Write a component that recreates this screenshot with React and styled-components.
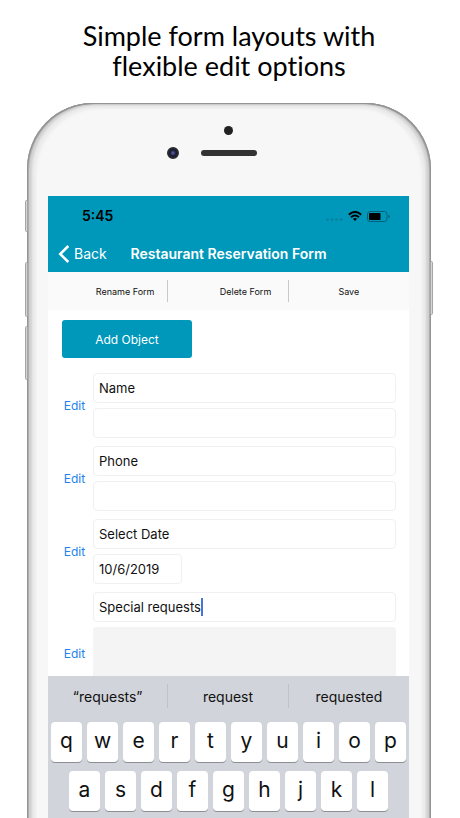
import React, { useState } from "react";
import styled, { createGlobalStyle } from "styled-components";

const teal = "#0098ba";

const Global = createGlobalStyle`
  *, *::before, *::after { box-sizing: border-box; }
  body { margin: 0; background: #fff; font-family: Inter, "Liberation Sans", sans-serif; color: #111; }
  button, input, textarea { font: inherit; color: inherit; margin: 0; }
`;

const Page = styled.main`
  min-height: 100vh;
  display: flex;
  flex-direction: column;
  padding: 0 29px 0 27px;
`;

const Headline = styled.h1`
  margin: 0;
  padding: 21px 0 22px;
  text-align: center;
  font-family: "Century Gothic", "URW Gothic", Lato, sans-serif;
  font-weight: 400;
  font-size: 27px;
  line-height: 30px;
  font-variant-ligatures: none;
  color: #000;
`;

const Phone = styled.div`
  position: relative;
  flex: 1;
  display: flex;
  flex-direction: column;
  padding: 0 22px 0 21px;
  border-radius: 66px 66px 0 0;
  background: #f7f7f7;
  box-shadow:
    inset 1px 1px 0 #949494,
    inset -1px 1px 0 #949494,
    inset 2px 1px 1px #a9a9a9,
    inset -2px 1px 1px #a9a9a9,
    inset 5px 2px 2px #d2d2d2,
    inset -5px 2px 2px #d2d2d2,
    inset 9px 5px 3px #ebebeb,
    inset -9px 5px 3px #ebebeb;
`;

const SideButton = styled.span`
  position: absolute;
  top: ${(p) => p.$top}px;
  ${(p) => p.$side}: -2px;
  width: 3px;
  height: ${(p) => p.$height}px;
  border: 1px solid #a5a5a5;
  border-radius: 2px;
  background: #d6d6d6;
`;

const Bezel = styled.div`
  display: flex;
  flex-direction: column;
  align-items: center;
  gap: 12px;
  height: 93px;
  padding-top: 23px;
`;

const Sensor = styled.span`
  width: 9px;
  height: 9px;
  border-radius: 50%;
  background: #222;
`;

const SpeakerRow = styled.div`
  display: grid;
  grid-template-columns: 12px 56px 12px;
  align-items: center;
  gap: 22px;
`;

const Camera = styled.span`
  height: 12px;
  border-radius: 50%;
  border: 2px solid #29292e;
  background: radial-gradient(circle, #6668a0 0, #20224a 45%, #15151d 80%);
`;

const Speaker = styled.span`
  height: 6px;
  border-radius: 3px;
  background: #333;
`;

const Screen = styled.div`
  flex: 1;
  display: flex;
  flex-direction: column;
  background: #fff;
`;

const AppHeader = styled.header`
  background: ${teal};
  color: #fff;
`;

const StatusBar = styled.div`
  display: flex;
  justify-content: space-between;
  align-items: center;
  height: 40px;
  padding: 0 19px 0 34px;
  color: #000;
`;

const Time = styled.span`
  font-size: 14px;
  line-height: 20px;
  font-weight: 600;
`;

const StatusIcons = styled.span`
  display: flex;
  align-items: center;
  gap: 5px;
`;

const NavBar = styled.nav`
  display: grid;
  grid-template-columns: 1fr auto 1fr;
  align-items: center;
  height: 36px;
  padding: 0 10px;
`;

const BackButton = styled.button`
  display: flex;
  align-items: center;
  gap: 4px;
  padding: 0;
  border: 0;
  background: none;
  font-size: 14px;
  line-height: 20px;
`;

const Title = styled.h2`
  margin: 0;
  font-size: 14px;
  line-height: 20px;
  font-weight: 600;
  white-space: nowrap;
`;

const Toolbar = styled.div`
  display: grid;
  grid-template-columns: repeat(3, 1fr);
  align-items: center;
  height: 38px;
  background: #fafafa;
`;

const ToolButton = styled.button`
  height: 22px;
  padding: 0 0 0 ${(p) => (p.$last ? 0 : 35)}px;
  border: 0;
  border-right: ${(p) => (p.$last ? "0" : "1px solid #c9c9c9")};
  background: none;
  font-size: 9px;
`;

const Form = styled.form`
  display: flex;
  flex-direction: column;
  gap: 8px;
  padding: 10px 13px 0 14px;
`;

const AddButton = styled.button`
  align-self: flex-start;
  width: 130px;
  height: 38px;
  margin-bottom: 7px;
  border: 0;
  border-radius: 3px;
  background: ${teal};
  color: #fff;
  font-size: 12px;
`;

const Group = styled.div`
  display: grid;
  grid-template-columns: 25px 1fr;
  align-items: center;
  gap: 6px;
`;

const EditButton = styled.button`
  padding: 0;
  border: 0;
  background: none;
  color: #2482ee;
  font-size: 12px;
  line-height: 16px;
`;

const Fields = styled.div`
  display: flex;
  flex-direction: column;
  gap: 5px;
`;

const TextField = styled.input`
  width: ${(p) => (p.$short ? "89px" : "100%")};
  height: 30px;
  padding: 0 5px;
  border: 1px solid #f0f0f0;
  border-radius: 4px;
  background: #fff;
  font-size: 13px;
  outline: none;
`;

const FocusedField = styled.label`
  display: flex;
  align-items: center;
  height: 30px;
  padding: 0 5px;
  border: 1px solid #f0f0f0;
  border-radius: 4px;
  font-size: 13px;
`;

const FocusedInput = styled.input`
  field-sizing: content;
  padding: 0;
  border: 0;
  outline: none;
  background: none;
`;

const Caret = styled.span`
  width: 2px;
  height: 18px;
  background: #4a72dc;
`;

const Notes = styled.textarea`
  display: block;
  width: 100%;
  height: 88px;
  border: 0;
  border-radius: 3px;
  background: #f4f4f4;
  resize: none;
  outline: none;
`;

/* The keyboard slides over the lower part of the form. */
const Keyboard = styled.section`
  position: relative;
  flex: 1;
  margin-top: -39px;
  background: #d1d4db;
`;

const Suggestions = styled.div`
  display: grid;
  grid-template-columns: repeat(3, 1fr);
  padding: 8px 0 14px;
`;

const Suggestion = styled.button`
  height: 24px;
  padding: 0;
  border: 0;
  border-right: ${(p) => (p.$last ? "0" : "1px solid #c0c3cb")};
  background: none;
  font-size: 14px;
`;

const KeyRow = styled.div`
  display: flex;
  gap: 5px;
  padding: 0 ${(p) => p.$inset}px 9px;
`;

const Key = styled.button`
  flex: 1;
  min-width: 0;
  height: 40px;
  padding: 0 0 2px;
  border: 0;
  border-radius: 4px;
  background: #fff;
  box-shadow: 0 1px 0 #8c8f94;
  font-size: 21px;
  line-height: 28px;
`;

const WifiIcon = () => (
  <svg width="14" height="10" viewBox="0 0 14 10" aria-hidden="true">
    <g fill="none" stroke="#000" strokeWidth="2">
      <path d="M.8 3.7Q7-1.8 13.2 3.7" />
      <path d="M3 6.2Q7 2.7 11 6.2" />
    </g>
    <path d="M4.9 7.8Q7 6 9.1 7.8L7 10Z" />
  </svg>
);

const BatteryIcon = () => (
  <svg width="23" height="11" viewBox="0 0 23 11" aria-hidden="true">
    <rect x=".5" y=".5" width="19.5" height="10" rx="2.6" fill="none" stroke="#056177" />
    <rect x="2" y="2" width="11.5" height="7" rx="1" />
    <path d="M21.3 3.7Q22.8 4.2 22.8 5.5T21.3 7.3Z" fill="#056177" />
  </svg>
);

const SignalIcon = () => (
  <svg width="17" height="10" viewBox="0 0 17 10" aria-hidden="true" fill="#087b97">
    {[1.5, 6, 10.5, 15].map((x) => (
      <circle key={x} cx={x} cy="8.6" r="1.2" />
    ))}
  </svg>
);

const BackIcon = () => (
  <svg width="12" height="18" viewBox="0 0 12 18" aria-hidden="true">
    <path d="M10.3 1 2.2 9l8.1 8" fill="none" stroke="#fff" strokeWidth="2.5" />
  </svg>
);

const groups = [
  { label: "Name", value: "" },
  { label: "Phone", value: "" },
  { label: "Select Date", value: "10/6/2019", short: true },
];

const suggestions = ["“requests”", "request", "requested"];

const keyRows = [
  { keys: "qwertyuiop", inset: 3 },
  { keys: "asdfghjkl", inset: 21 },
];

export default function App() {
  const [request, setRequest] = useState("Special requests");
  return (
    <Page>
      <Global />
      <Headline>
        Simple form layouts with
        <br />
        flexible edit options
      </Headline>
      <Phone>
        <SideButton $side="left" $top={97} $height={32} />
        <SideButton $side="left" $top={159} $height={55} />
        <SideButton $side="left" $top={223} $height={54} />
        <SideButton $side="right" $top={158} $height={54} />
        <Bezel>
          <Sensor />
          <SpeakerRow>
            <Camera />
            <Speaker />
          </SpeakerRow>
        </Bezel>
        <Screen>
          <AppHeader>
            <StatusBar>
              <Time>5:45</Time>
              <StatusIcons>
                <SignalIcon />
                <WifiIcon />
                <BatteryIcon />
              </StatusIcons>
            </StatusBar>
            <NavBar>
              <BackButton type="button">
                <BackIcon />
                Back
              </BackButton>
              <Title>Restaurant Reservation Form</Title>
            </NavBar>
          </AppHeader>
          <Toolbar>
            <ToolButton type="button">Rename Form</ToolButton>
            <ToolButton type="button">Delete Form</ToolButton>
            <ToolButton type="button" $last>
              Save
            </ToolButton>
          </Toolbar>
          <Form>
            <AddButton type="button">Add Object</AddButton>
            {groups.map((g) => (
              <Group key={g.label}>
                <EditButton type="button">Edit</EditButton>
                <Fields>
                  <TextField aria-label={`${g.label} label`} defaultValue={g.label} />
                  <TextField aria-label={g.label} defaultValue={g.value} $short={g.short} />
                </Fields>
              </Group>
            ))}
            <Group>
              <EditButton type="button">Edit</EditButton>
              <Fields>
                <FocusedField>
                  <FocusedInput
                    aria-label="Special requests label"
                    value={request}
                    onChange={(e) => setRequest(e.target.value)}
                  />
                  <Caret />
                </FocusedField>
                <Notes aria-label="Special requests" />
              </Fields>
            </Group>
          </Form>
          <Keyboard aria-label="Keyboard">
            <Suggestions>
              {suggestions.map((s, i) => (
                <Suggestion type="button" key={s} $last={i === 2}>
                  {s}
                </Suggestion>
              ))}
            </Suggestions>
            {keyRows.map((row) => (
              <KeyRow key={row.keys} $inset={row.inset}>
                {row.keys.split("").map((k) => (
                  <Key type="button" key={k}>
                    {k}
                  </Key>
                ))}
              </KeyRow>
            ))}
          </Keyboard>
        </Screen>
      </Phone>
    </Page>
  );
}
